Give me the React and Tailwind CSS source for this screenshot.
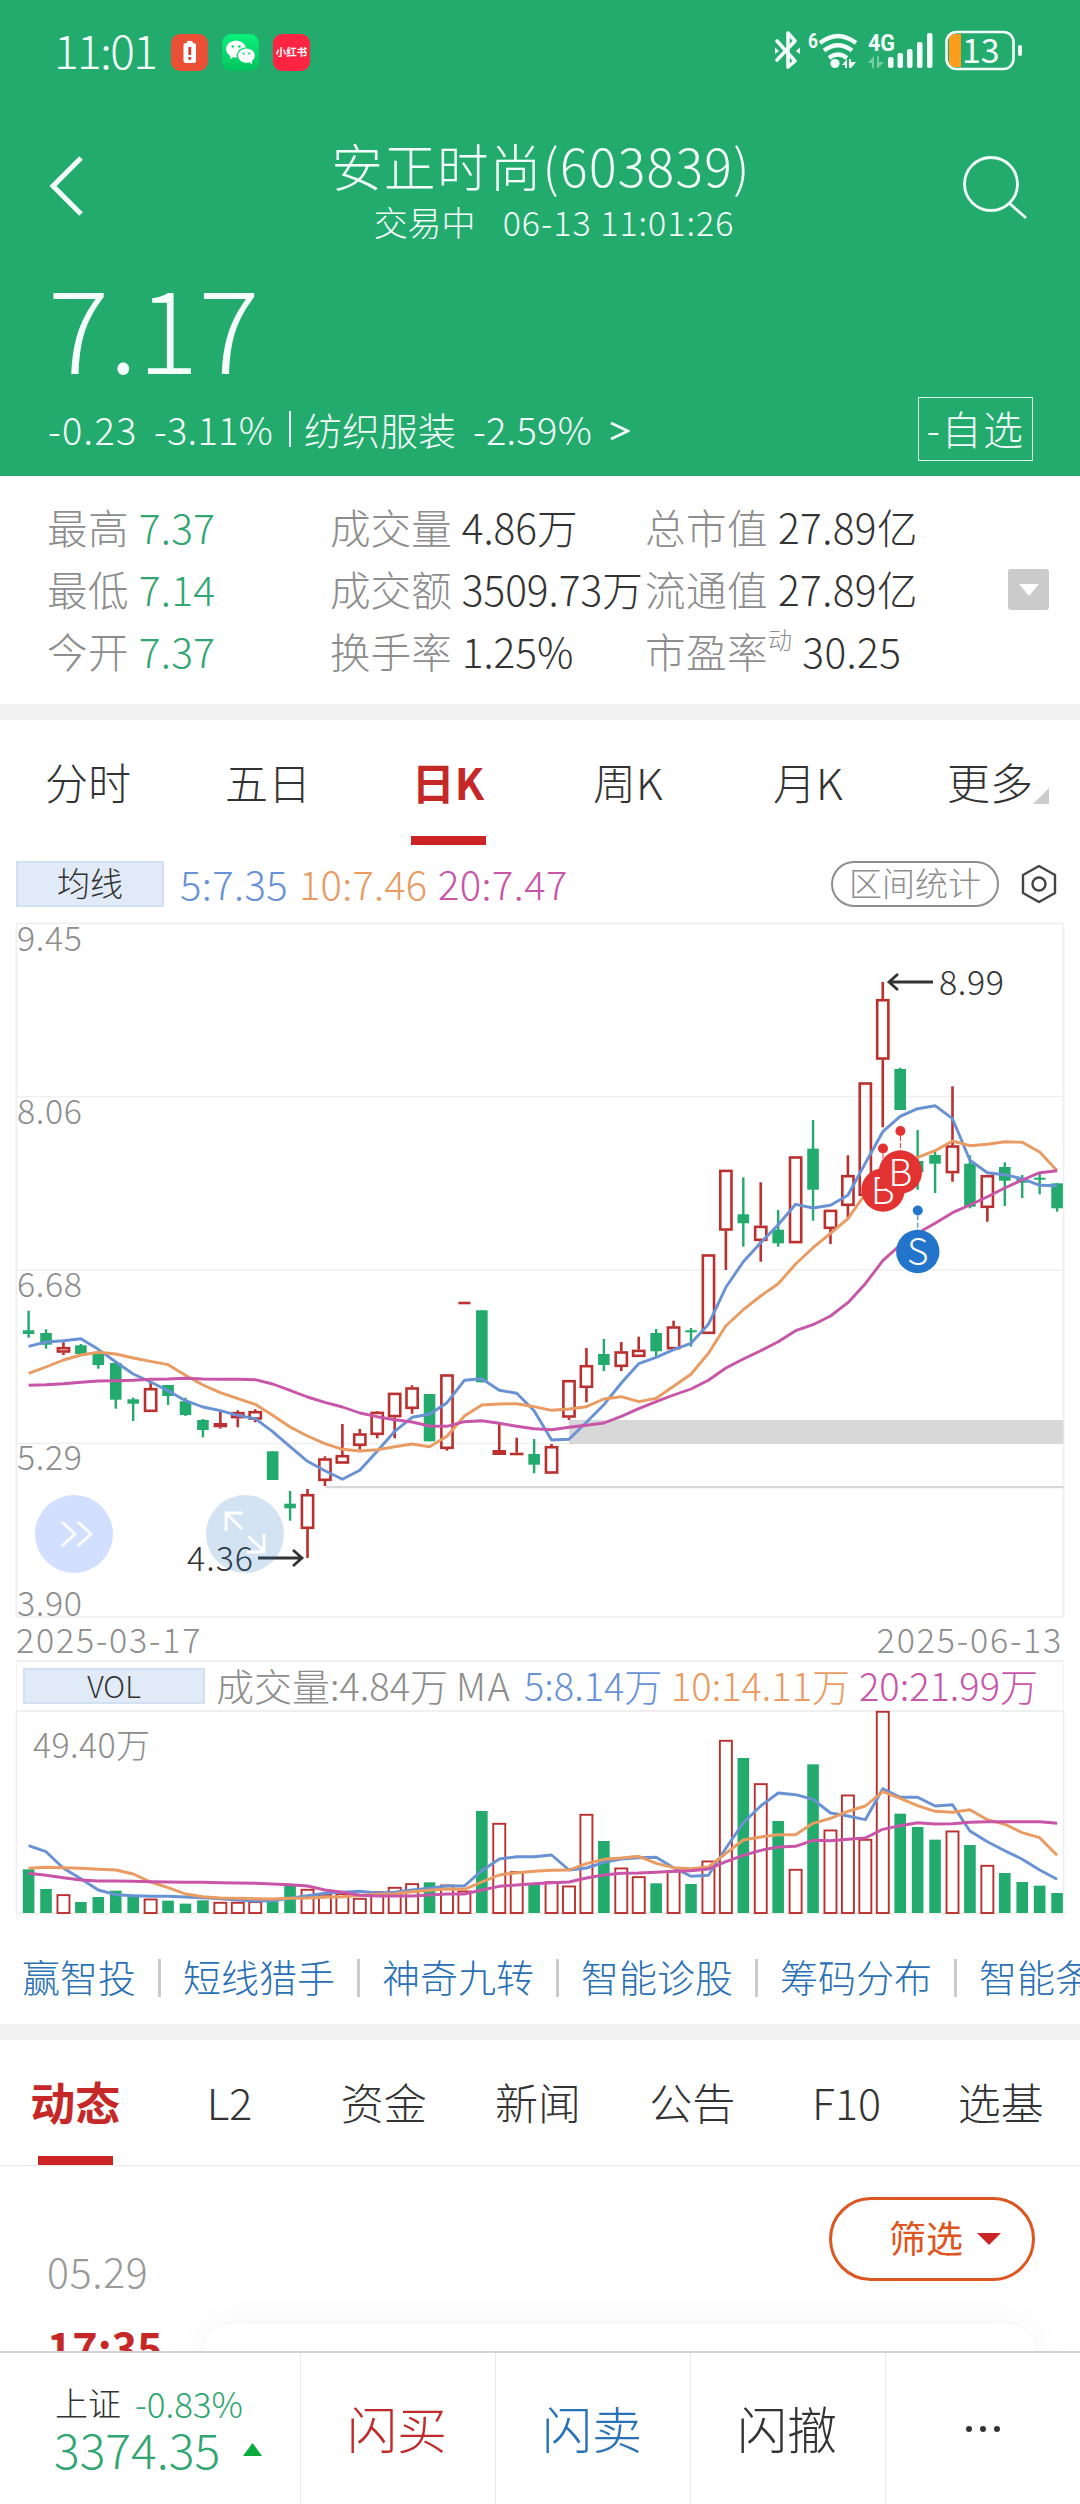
import React from "react";

/* ---------- chart data ---------- */

const STEP = 17.432;
const FIRST = 28.6;
const cx = (i) => FIRST + STEP * i;
const px = (base, list) => list.map((v) => base + v / 3);
const path = (ys) => ys.map((y, i) => `${cx(i).toFixed(1)},${y.toFixed(1)}`).join(" ");

// [up, high, bodyTop, bodyBottom, low]
const CANDLES = [
  [0, 1310.7, 1330.3, 1334, 1337.7], [0, 1329.3, 1333, 1344.7, 1348.7], [1, 1342.3, 1347, 1352.7, 1355],
  [0, 1344, 1345.3, 1354, 1354], [0, 1354, 1354, 1365, 1368.7], [0, 1363, 1363, 1399.7, 1408.7],
  [0, 1397.7, 1399.3, 1403.7, 1421], [1, 1382.7, 1388, 1412, 1412], [0, 1385, 1385, 1396, 1405],
  [0, 1397.7, 1401.3, 1415, 1416], [0, 1419, 1420, 1430, 1437.3], [1, 1411.7, 1423, 1427.3, 1428.7],
  [1, 1410.3, 1412, 1418.3, 1427.3], [1, 1409.3, 1411, 1419.7, 1422.3], [0, 1451.3, 1451.3, 1480, 1480],
  [0, 1491, 1503.7, 1508.3, 1520.7], [1, 1489, 1494, 1529, 1558], [1, 1456.3, 1458.3, 1481, 1486],
  [1, 1424, 1455, 1463.7, 1463.7], [1, 1429, 1433.3, 1446, 1449.7], [1, 1411, 1411.7, 1435, 1438.3],
  [1, 1392.7, 1392.7, 1417.3, 1438.3], [1, 1385.3, 1387.3, 1409, 1413.7], [0, 1394, 1394, 1441.3, 1441.3],
  [1, 1374.3, 1374.3, 1449, 1450.7], [2, 1301.7, 1301.7, 1304.3, 1304.3], [0, 1310.3, 1310.3, 1382.3, 1382.3],
  [1, 1424, 1450, 1455, 1455], [1, 1437.7, 1452.7, 1455.3, 1455.3], [0, 1439, 1454, 1464.7, 1473.3],
  [1, 1444, 1446, 1473.7, 1473.7], [1, 1380, 1380, 1417.7, 1420], [1, 1348, 1365, 1388, 1402.3],
  [0, 1339, 1354, 1365, 1371], [1, 1342, 1351.3, 1367, 1371], [1, 1336.7, 1349.7, 1357, 1357],
  [0, 1329, 1333, 1351.3, 1358], [1, 1320.7, 1326.3, 1349.3, 1349.3], [0, 1328, 1330.3, 1332.3, 1346.7],
  [1, 1254.3, 1254.3, 1334, 1334], [1, 1169.7, 1169.7, 1230.7, 1270], [0, 1177.3, 1214.3, 1223.3, 1246.7],
  [1, 1182.3, 1225.7, 1241, 1261.7], [0, 1210, 1229.7, 1243.3, 1246.7], [1, 1156.3, 1156.3, 1243.3, 1243.3],
  [0, 1120, 1148.7, 1189.7, 1220.7], [1, 1209.7, 1209.7, 1229, 1244], [1, 1155.3, 1175, 1206, 1219],
  [1, 1082.3, 1082.3, 1196, 1196], [1, 982, 999, 1059.7, 1127.3], [0, 1067.7, 1069, 1110, 1110],
  [0, 1130, 1161, 1172, 1189.7], [0, 1151.3, 1155, 1163.7, 1193], [1, 1086.3, 1145.3, 1173.3, 1181.7],
  [0, 1155.3, 1163.7, 1206.7, 1208.3], [1, 1175, 1175, 1208, 1221.7], [0, 1162.3, 1167, 1180.7, 1206],
  [0, 1175, 1178.7, 1182.7, 1198], [0, 1174, 1177.7, 1179.7, 1194.3], [0, 1183.3, 1183.3, 1208.3, 1211.7],
];

const MA5 = [
  1346.3, 1342, 1340.7, 1338.7, 1349.3, 1362, 1374, 1382, 1390.7, 1400.7, 1407, 1410.7, 1415.3, 1418.7, 1431.7,
  1446.7, 1461.3, 1470.7, 1479.3, 1470.3, 1451.3, 1431.3, 1417.3, 1414.3, 1402.7, 1380.3, 1378.7, 1390.3, 1393.3,
  1410.7, 1440, 1439.3, 1422.3, 1404.7, 1383, 1363.7, 1357.3, 1349.7, 1343.3, 1324.3, 1287.3, 1261.7, 1242.7,
  1224.7, 1204.3, 1208, 1205.3, 1195.3, 1163.3, 1131.7, 1116.3, 1108.7, 1105.7, 1118.7, 1160.3, 1172.7, 1174.7,
  1178.7, 1185.3, 1185.7,
];
const MA10 = [
  ...px(1280, [280, 261, 240, 225, 217, 222, 234, 244, 254, 286, 315, 338, 356, 373, 406, 441, 468, 491, 508, 513, 509, 500, 492, 500, 469, 408, 375, 372, 371]),
  ...px(1260, [440, 451, 447, 440, 417, 410, 425, 415, 379, 343]),
  ...px(960, [1180, 1097, 1049, 1008, 971, 912, 863, 820, 776, 702, 640, 612, 592, 572, 543, 557, 553, 545, 547, 576, 632]),
];
const MA20 = [
  ...px(1280, [316, 314, 311, 307, 303, 302, 301, 298, 297, 295, 297, 298, 298, 299, 312, 331, 351, 367, 381, 399, 410, 419, 426, 438, 439, 425, 422, 430, 439]),
  ...px(1260, [506, 509, 502, 496, 489, 469, 446, 425, 405, 387, 361]),
  ...px(960, [1224, 1197, 1172, 1145, 1112, 1094, 1068, 1028, 971, 902, 855, 820, 790, 758, 735, 710, 684, 660, 638, 632]),
];

const VOL = px(1640, [
  688, 747, 763, 786, 771, 752, 764, 776, 782, 791, 781, 786, 786, 784, 784, 738, 747, 762, 760, 774,
  754, 741, 730, 727, 734, 752, 513, 549, 694, 735, 724, 737, 522, 603, 683, 709, 730, 692, 732, 662,
  300, 354, 430, 543, 687, 373, 569, 464, 597, 213, 521, 561, 599, 572, 615, 675, 699, 726, 737, 759,
]);
const VMA5 = px(1640, [
  617, 635, 685, 716, 750, 764, 767, 769, 769, 771, 773, 776, 780, 783, 782, 775, 767, 760, 757, 754,
  759, 757, 750, 745, 738, 738, 692, 657, 650, 650, 645, 690, 684, 667, 657, 653, 652, 683, 709, 706,
  625, 548, 498, 459, 464, 478, 519, 528, 539, 446, 472, 472, 498, 494, 573, 605, 632, 658, 690, 718,
]);
const VMA10 = px(1640, [
  685, 682, 683, 685, 688, 690, 702, 726, 743, 762, 770, 774, 775, 776, 777, 775, 774, 772, 770, 766,
  763, 761, 755, 751, 747, 748, 726, 705, 698, 694, 691, 690, 671, 658, 654, 649, 670, 683, 686, 681,
  640, 600, 591, 584, 584, 550, 535, 514, 498, 455, 475, 497, 514, 517, 509, 539, 553, 578, 593, 646,
]);
const VMA20 = px(1640, [
  700, 706, 713, 720, 723, 723, 724, 725, 726, 727, 727, 728, 729, 730, 732, 734, 738, 750, 757, 766,
  768, 768, 768, 765, 762, 762, 750, 739, 735, 731, 728, 726, 714, 705, 700, 699, 697, 694, 692, 687,
  665, 646, 631, 621, 619, 601, 602, 598, 594, 568, 557, 548, 552, 551, 547, 545, 545, 545, 545, 550,
]);

const RED = "#b9302e";
const GREEN = "#23ab6e";
const BLUE = "#6992d4";
const ORANGE = "#e99b62";
const PURPLE = "#c855a8";

/* ---------- charts ---------- */

function Candle({ i, d }) {
  const [up, hi, top, bot, lo] = d;
  const x = cx(i);
  if (up === 2) return <rect x={x - 6} y={top} width="12" height={bot - top} fill={RED} />;
  if (!up) {
    return (
      <g fill={GREEN}>
        <rect x={x - 1.2} y={hi} width="2.4" height={lo - hi} />
        <rect x={x - 5.8} y={top} width="11.6" height={bot - top} />
      </g>
    );
  }
  const h = bot - top;
  return (
    <g>
      <rect x={x - 1.3} y={hi} width="2.6" height={top - hi} fill={RED} />
      <rect x={x - 1.3} y={bot} width="2.6" height={lo - bot} fill={RED} />
      {h < 5.1 ? (
        <rect x={x - 6.8} y={top} width="13.6" height={h} fill={RED} />
      ) : (
        <rect x={x - 5.6} y={top + 1.2} width="11.2" height={h - 2.4} fill="none" stroke={RED} strokeWidth="2.6" />
      )}
    </g>
  );
}

function MaLines({ sets }) {
  return [BLUE, ORANGE, PURPLE].map((c, k) => (
    <polyline key={c} points={path(sets[k])} fill="none" stroke={c} strokeWidth="2.9" strokeLinejoin="round" />
  ));
}

function Marker({ x, dotY, y, label, color }) {
  return (
    <g>
      <circle cx={x} cy={dotY} r="5" fill={color} />
      <line x1={x} x2={x} y1={dotY + 5} y2={y - 20} stroke={color} strokeWidth="1" strokeDasharray="5 2" />
      <circle cx={x} cy={y} r="21.7" fill={color} />
      <text x={x} y={y + 13.5} textAnchor="middle" fontSize="37" fill="#fff">{label}</text>
    </g>
  );
}

function PriceChart() {
  return (
    <svg className="block h-[697px] w-full overflow-visible" viewBox="0 922 1080 697">
      <g stroke="#efefef" strokeWidth="1.6" fill="none">
        <rect x="16.5" y="923.5" width="1047" height="693.5" />
        <path d="M16 1096.5H1064M16 1270H1064M16 1443.5H1064" />
      </g>
      <rect x="569" y="1420" width="494.5" height="24" fill="#d8d8d8" />
      <rect x="325" y="1486" width="738.5" height="2.2" fill="#d8d8d8" />
      <g fontSize="34" fill="#8d8d8d">
        <text x="17" y="950.5" textLength="65">9.45</text>
        <text x="17" y="1124" textLength="65">8.06</text>
        <text x="17" y="1297" textLength="65">6.68</text>
        <text x="17" y="1470" textLength="65">5.29</text>
        <text x="17" y="1616" textLength="65">3.90</text>
      </g>
      {CANDLES.map((d, i) => <Candle key={i} i={i} d={d} />)}
      <MaLines sets={[MA5, MA10, MA20]} />

      <g fill="#333" stroke="none" fontSize="34">
        <text x="939" y="995" textLength="65">8.99</text>
        <text x="187" y="1571" textLength="66">4.36</text>
      </g>
      <g stroke="#333" strokeWidth="2.8" fill="none">
        <path d="M933 982H889M898 974L889 982L898 990" />
        <path d="M258 1558H302M293 1550L302 1558L293 1566" />
      </g>

      <Marker x={883} dotY={1148.5} y={1190} label="B" color="#e33232" />
      <Marker x={900.4} dotY={1131} y={1172} label="B" color="#e33232" />
      <Marker x={917.8} dotY={1210.5} y={1251.5} label="S" color="#2375cc" />

      <circle cx="74" cy="1534" r="39" fill="#d2dffe" />
      <path d="M62 1522L75 1534L62 1546M78 1522L91 1534L78 1546" fill="none" stroke="#fff" strokeWidth="2.8" />
      <circle cx="245" cy="1534" r="39" fill="#2375bb" fillOpacity="0.2" />
      <path d="M242 1529L226 1513M226 1531V1513H243M248 1536L264 1551M247 1552H264V1534" fill="none" stroke="#fff" strokeWidth="2.8" />
    </svg>
  );
}

function VolumeChart() {
  const base = 1913;
  return (
    <svg className="block h-[205px] w-full" viewBox="0 1710 1080 205">
      <path d="M16.5 1710V1913.5H1063.5V1710M16 1711H1064" fill="none" stroke="#efefef" strokeWidth="1.8" />
      <text x="33" y="1758" fontSize="34" fill="#8d8d8d" textLength="117">49.40万</text>
      {VOL.map((y, i) =>
        CANDLES[i][0] ? (
          <rect key={i} x={cx(i) - 6} y={y + 0.8} width="12" height={base - y - 0.8} fill="#fff" stroke={RED} strokeWidth="1.9" />
        ) : (
          <rect key={i} x={cx(i) - 5.8} y={y} width="11.6" height={base - y} fill={GREEN} />
        )
      )}
      <MaLines sets={[VMA5, VMA10, VMA20]} />
    </svg>
  );
}

/* ---------- status bar ---------- */

function StatusBar() {
  return (
    <div className="flex h-[104px] items-center justify-between pr-[57px] pl-[54px]">
      <div className="flex items-center">
        <span className="-mt-[6px] w-[117px] text-[46px] leading-none tracking-[-1.5px]">11:01</span>
        <span className="mr-[14px] flex size-[37px] items-center justify-center rounded-[9px] bg-[#ea5036]">
          <svg viewBox="0 0 37 37" className="size-[37px]">
            <rect x="16" y="7" width="5.5" height="3" fill="#fff" />
            <rect x="12.5" y="9" width="12.5" height="20" rx="2.5" fill="#fff" />
            <rect x="17.4" y="13" width="2.8" height="8" fill="#d43d28" />
            <rect x="17.4" y="23" width="2.8" height="2.8" fill="#d43d28" />
          </svg>
        </span>
        <span className="mr-[14px] flex size-[37px] rounded-[9px] bg-gradient-to-b from-[#07f07a] to-[#05c45f]">
          <svg viewBox="0 0 37 37" className="size-[37px]">
            <path d="M9 19L8 25L13 22Z" fill="#fff" />
            <ellipse cx="14" cy="15" rx="10" ry="8.6" fill="#fff" />
            <ellipse cx="24" cy="21.6" rx="9.4" ry="8.2" fill="#06d869" />
            <ellipse cx="24.4" cy="21.6" rx="8.4" ry="7.2" fill="#fff" />
            <path d="M26 27L30 30.5L30 25Z" fill="#fff" />
            <g fill="#06d869">
              <circle cx="10.8" cy="12.5" r="1.3" /><circle cx="17.4" cy="12.5" r="1.3" />
              <circle cx="21.7" cy="19.6" r="1.1" /><circle cx="27.2" cy="19.6" r="1.1" />
            </g>
          </svg>
        </span>
        <span className="flex size-[37px] items-center justify-center rounded-[9px] bg-[#ff2442] text-[10.5px] leading-none font-bold whitespace-nowrap">
          小红书
        </span>
      </div>
      <svg viewBox="774 32 249 42" className="h-[42px] w-[249px] overflow-visible" fill="none" stroke="#f4fffb">
        <path d="M777 42L795 62L788 68V34L795 42L777 61" strokeWidth="3.6" strokeLinejoin="round" strokeLinecap="round" />
        <path d="M775 48.5V55L779 52ZM800 48.5V55L796 52Z" fill="#f4fffb" stroke="none" />
        <g strokeWidth="4.2">
          <path d="M820 44Q838 30 856 44" />
          <path d="M824 51.5Q838 41 852 51.5" />
          <path d="M829 59Q838 52 847 59" />
        </g>
        <g fill="#f4fffb" stroke="none">
          <circle cx="835" cy="64.5" r="4.6" />
          <path d="M842 66L847 60V69H845V66ZM849 60H851V63H856L851 69H849Z" />
          <text x="808" y="48.5" fontSize="20" fontWeight="700" fontFamily="Roboto" textLength="10" lengthAdjust="spacingAndGlyphs">6</text>
          <text x="868" y="52" fontSize="23" fontWeight="700" fontFamily="Roboto" textLength="27" lengthAdjust="spacingAndGlyphs">4G</text>
          <path opacity="0.4" d="M868 64L874 57V69H872V64ZM877 57H879V63H884L878 69H877Z" />
          <rect x="888" y="58" width="5.5" height="11" rx="2" />
          <rect x="897.5" y="54" width="5.5" height="15" rx="2" />
          <rect x="907" y="50" width="5.5" height="19" rx="2" />
          <rect x="917" y="43" width="5.5" height="26" rx="2" />
          <rect x="927" y="34" width="5.5" height="35" rx="2" />
          <rect x="1018" y="46" width="4" height="11" rx="2" />
        </g>
        <path d="M961 35V68H955Q949 68 949 62V41Q949 35 955 35Z" fill="#ff9c1c" stroke="none" />
        <rect x="946.5" y="33" width="67" height="37" rx="10" strokeWidth="2.6" />
        <text x="962" y="64" fontSize="34" fontWeight="400" fill="#f4fffb" stroke="none">13</text>
      </svg>
    </div>
  );
}

/* ---------- page pieces ---------- */

function Stat({ label, value, sup, green }) {
  return (
    <div className="flex h-[62px] items-center whitespace-nowrap text-[40.6px] leading-none">
      <span className="text-[#8d8d8d]">{label}</span>
      {sup && <span className="-mt-[24px] text-[24px] text-[#8d8d8d]">{sup}</span>}
      <span className={green ? "ml-[10px] text-[#31a672]" : "ml-[10px] text-[#333]"}>{value}</span>
    </div>
  );
}

const LINKS = ["短线猎手", "神奇九转", "智能诊股", "筹码分布", "智能条件"];

export default function App() {
  return (
    <div className="flex h-[2504px] w-[1080px] flex-col overflow-hidden bg-white font-['Noto_Sans_CJK_SC',sans-serif] font-light text-[#333]">
      <header className="h-[476px] shrink-0 bg-[#23ab6e] text-[#f4fffb]">
        <StatusBar />
        <div className="flex h-[156px] items-start justify-between pr-[52px] pl-[48px]">
          <svg viewBox="0 0 36 60" className="mt-[52px] h-[60px] w-[36px]" fill="none" stroke="currentColor" strokeWidth="5">
            <path d="M33 2L5 30L33 58" />
          </svg>
          <div className="ml-[36px] flex flex-col items-center whitespace-nowrap">
            <div className="mt-[31px] text-[51.5px] leading-[60px] tracking-[1.3px]">安正时尚(603839)</div>
            <div className="mt-[7px] ml-[26px] flex text-[34px] leading-[40px]">
              <span className="mr-[27px]">交易中</span>
              <span className="tracking-[1px]">06-13 11:01:26</span>
            </div>
          </div>
          <svg viewBox="0 0 66 66" className="mt-[51px] size-[66px]" fill="none" stroke="currentColor" strokeWidth="2.8">
            <circle cx="29" cy="29" r="26.5" />
            <path d="M47 48L64 63" />
          </svg>
        </div>
        <div className="flex h-[130px] items-center pl-[48px] text-[114px] leading-none">7.17</div>
        <div className="-mt-[3px] flex h-[84px] items-center pr-[47px] pl-[48px] text-[38px] leading-none whitespace-nowrap">
          <span className="w-[106px] tracking-[1.3px]">-0.23</span>
          <span className="w-[135px] tracking-[0.3px]">-3.11%</span>
          <span className="mr-[13px] h-[36px] w-[2px] bg-[#f4fffb]" />
          <span className="w-[169px]">纺织服装</span>
          <span className="w-[137px] tracking-[0.3px]">-2.59%</span>
          <svg viewBox="0 0 20 20" className="mt-[3px] h-[20px] w-[20px]" fill="none" stroke="currentColor" strokeWidth="2.6">
            <path d="M1 2L18 10L1 18" />
          </svg>
          <span className="ml-auto flex h-[64px] w-[115px] items-center justify-center border-[1.5px] border-[#d9f5e8] pb-[3px] text-[40px] tracking-[1.5px]">-自选</span>
        </div>
      </header>

      <section className="flex h-[228px] shrink-0 items-start pt-[20px] pl-[47px]">
        <div className="w-[283px] tracking-[0.3px]">
          <Stat label="最高" value="7.37" green />
          <Stat label="最低" value="7.14" green />
          <Stat label="今开" value="7.37" green />
        </div>
        <div className="w-[315px]">
          <Stat label="成交量" value="4.86万" />
          <Stat label="成交额" value="3509.73万" />
          <Stat label="换手率" value="1.25%" />
        </div>
        <div className="w-[363px] tracking-[0.4px]">
          <Stat label="总市值" value="27.89亿" />
          <Stat label="流通值" value="27.89亿" />
          <Stat label="市盈率" sup="动" value="30.25" />
        </div>
        <div className="mt-[73px] flex size-[41px] items-center justify-center rounded-[3px] bg-[#cbcbcb]">
          <svg viewBox="0 0 20 12" className="h-[12px] w-[20px]"><path d="M0 0H20L10 12Z" fill="#fff" /></svg>
        </div>
      </section>
      <div className="h-[16px] shrink-0 bg-[#f1f1f1]" />

      <nav className="-ml-[2px] grid h-[126px] w-[1080px] shrink-0 grid-cols-6 text-[43px] leading-none whitespace-nowrap">
        {["分时", "五日", "日K", "周K", "月K"].map((t, i) => (
          <div key={t} className="flex flex-col items-center">
            <span className={i === 2 ? "mt-[40px] h-[76px] font-bold text-[#c62828]" : "mt-[40px] h-[76px]"}>{t}</span>
            {i === 2 && <span className="h-[9px] w-[75px] bg-[#cc2424]" />}
          </div>
        ))}
        <div className="flex items-start pt-[40px] pl-[49px]">
          <span>更多</span>
          <svg viewBox="0 0 16 16" className="mt-[28px] size-[16px]"><path d="M16 0V16H0Z" fill="#ccc" /></svg>
        </div>
      </nav>

      <div className="flex h-[76px] shrink-0 items-center pl-[16px] text-[40px] leading-none whitespace-nowrap">
        <span className="mr-[16px] flex h-[46px] w-[148px] items-center justify-center border-2 border-[#d3e0f4] bg-[#e1eaf7] pb-[3px] text-[33px]">均线</span>
        <span className="-mt-[3px] w-[119px] tracking-[0.4px] text-[#6992d4]">5:7.35</span>
        <span className="-mt-[3px] w-[139px] tracking-[0.2px] text-[#e99b62]">10:7.46</span>
        <span className="-mt-[3px] tracking-[0.4px] text-[#c855a8]">20:7.47</span>
        <span className="ml-auto flex h-[46px] w-[168px] items-center justify-center rounded-full border-2 border-[#8d8d8d] pb-[3px] text-[33px] text-[#8d8d8d]">区间统计</span>
        <svg viewBox="0 0 36 40" className="mr-[23px] ml-[22px] h-[40px] w-[36px]" fill="none" stroke="#444" strokeWidth="2.4">
          <path d="M18 2L34 11V29L18 38L2 29V11Z" strokeLinejoin="round" />
          <circle cx="18" cy="20" r="6.5" />
        </svg>
      </div>

      <PriceChart />

      <div className="flex h-[41px] shrink-0 items-center justify-between pr-[17px] pb-[2px] pl-[16px] text-[34px] leading-none tracking-[1.8px] text-[#8d8d8d]">
        <span>2025-03-17</span>
        <span>2025-06-13</span>
      </div>
      <div className="mx-[16px] flex h-[50px] shrink-0 items-center border-x-[1.5px] border-t-2 border-[#efefef] pl-[6px] text-[38px] leading-none whitespace-nowrap">
        <span className="mr-[11px] flex h-[36px] w-[182px] items-center justify-center border-2 border-[#d3e0f4] bg-[#e1eaf7] pb-[3px] text-[30px]">VOL</span>
        <span className="-mt-[2px] w-[240px] text-[#8d8d8d]">成交量:4.84万</span>
        <span className="-mt-[2px] w-[68px] tracking-[1.5px] text-[#8d8d8d]">MA</span>
        <span className="-mt-[2px] w-[147px] text-[#6992d4]">5:8.14万</span>
        <span className="-mt-[2px] w-[188px] text-[#e99b62]">10:14.11万</span>
        <span className="-mt-[2px] text-[#c855a8]">20:21.99万</span>
      </div>

      <VolumeChart />

      <div className="flex h-[109px] shrink-0 items-center overflow-hidden pt-[13px] pl-[22px] text-[38px] leading-none whitespace-nowrap text-[#2a70b5]">
        <span className="w-[136px] shrink-0">赢智投</span>
        {LINKS.map((t) => (
          <React.Fragment key={t}>
            <span className="mt-[3px] mr-[22px] h-[38px] w-[3px] shrink-0 bg-[#ccc]" />
            <span className="w-[174px] shrink-0">{t}</span>
          </React.Fragment>
        ))}
      </div>
      <div className="h-[16px] shrink-0 bg-[#f1f1f1]" />

      <nav className="-ml-[2px] grid h-[126px] w-[1082px] shrink-0 grid-cols-7 border-b border-[#e6e6e6] pr-[2px] text-[43px] leading-none whitespace-nowrap">
        {["动态", "L2", "资金", "新闻", "公告", "F10", "选基"].map((t, i) => (
          <div key={t} className="flex flex-col items-center">
            <span className={i === 0 ? "mt-[39px] h-[77px] text-[45px] font-bold text-[#c62828]" : "mt-[40px] h-[76px]"}>{t}</span>
            {i === 0 && <span className="h-[9px] w-[75px] bg-[#cc2424]" />}
          </div>
        ))}
      </nav>

      <section className="flex h-[185px] shrink-0 overflow-hidden pl-[47px]">
        <div className="w-[157px] shrink-0">
          <div className="mt-[84px] text-[41px] leading-none tracking-[0.7px] text-[#999]">05.29</div>
          <div className="mt-[33px] text-[43px] leading-none font-bold text-[#c62828]">17:35</div>
        </div>
        <div className="flex w-[831px] shrink-0 flex-col items-end">
          <div className="mt-[31px] flex h-[84px] w-[206px] shrink-0 items-center rounded-full border-3 border-[#dd5520] pb-[4px] pl-[57px] text-[37px] leading-none font-normal text-[#dd5520]">
            筛选
            <svg viewBox="0 0 24 12" className="mt-[4px] ml-[14px] h-[12px] w-[24px]"><path d="M0 0H24L12 12Z" fill="#cc2424" /></svg>
          </div>
          <div className="mt-[43px] h-[100px] w-full shrink-0 rounded-[28px] bg-white shadow-[0_0_36px_rgba(0,0,0,0.05)]" />
        </div>
      </section>

      <footer className="flex h-[153px] shrink-0 border-t-2 border-[#d2d2d2] bg-white leading-none">
        <div className="w-[300px] pt-[32px] pl-[55px]">
          <div className="flex items-center">
            <span className="mr-[14px] text-[33px]">上证</span>
            <span className="text-[35px] text-[#31a672]">-0.83%</span>
          </div>
          <div className="mt-[4px] -ml-[1px] flex items-center text-[48px] text-[#31a672]">
            3374.35
            <svg viewBox="0 0 19 13" className="ml-[23px] mt-[3px] h-[13px] w-[19px]"><path d="M9.5 0L19 13H0Z" fill="#0aab3c" /></svg>
          </div>
        </div>
        <div className="flex w-[195px] items-center justify-center border-l border-[#e6e6e6] pr-[2px] pb-[4px] text-[50px] text-[#c02a2a]">闪买</div>
        <div className="flex w-[195px] items-center justify-center border-l border-[#e6e6e6] pr-[2px] pb-[4px] text-[50px] text-[#2a72b8]">闪卖</div>
        <div className="flex w-[195px] items-center justify-center border-l border-[#e6e6e6] pr-[2px] pb-[4px] text-[50px]">闪撤</div>
        <div className="flex w-[195px] items-center justify-center gap-[8px] border-l border-[#e6e6e6]">
          <span className="size-[6px] rounded-full bg-[#333]" />
          <span className="size-[6px] rounded-full bg-[#333]" />
          <span className="size-[6px] rounded-full bg-[#333]" />
        </div>
      </footer>
    </div>
  );
}
